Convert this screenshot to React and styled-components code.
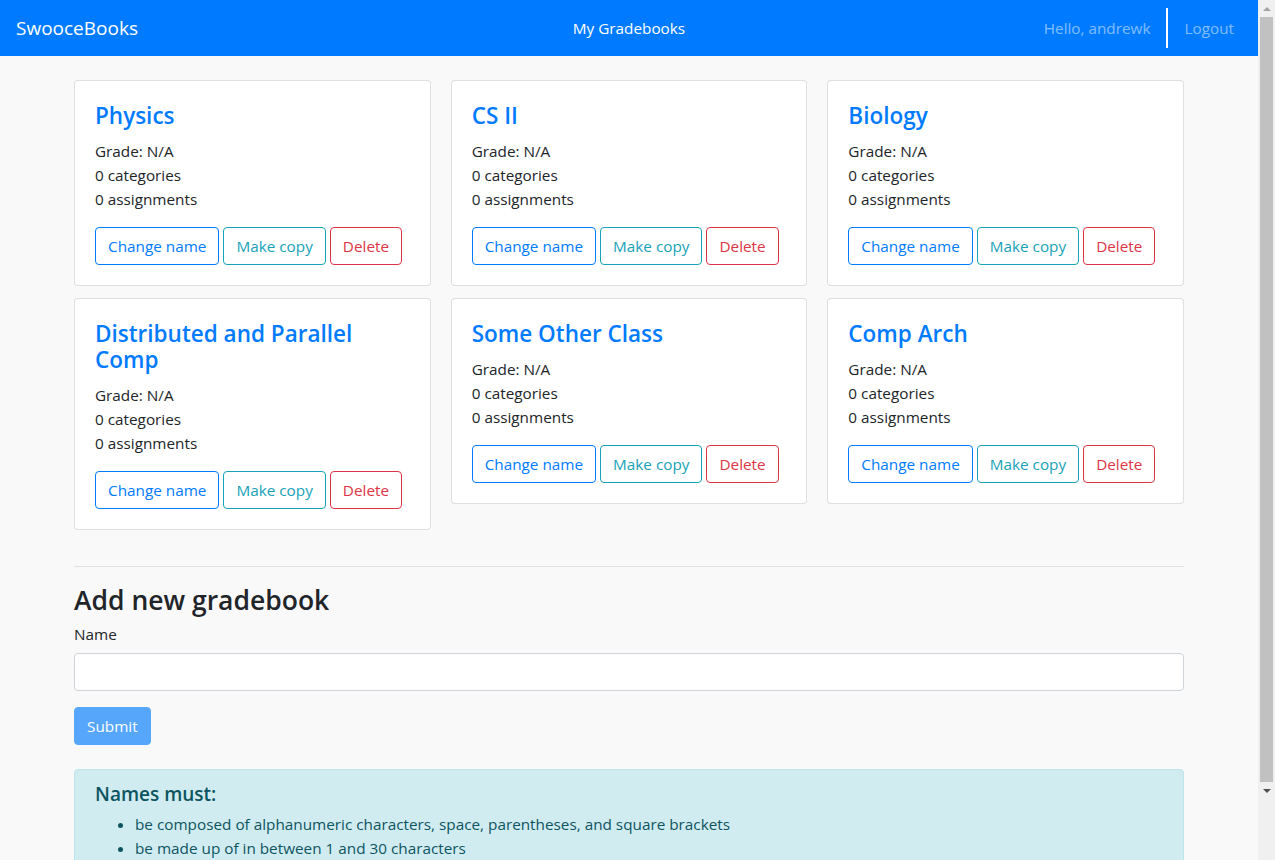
import styled, { createGlobalStyle } from "styled-components";

const GlobalStyle = createGlobalStyle`
  html, body {
    margin: 0;
    overflow: hidden;
  }
  body {
    font-family: "Open Sans", "Noto Sans", sans-serif;
    font-size: 15.3px;
    line-height: 24px;
    color: #212529;
    background-color: #f9f9f9;
  }
  * {
    box-sizing: border-box;
  }
`;

const gradebooks = [
  { name: "Physics" },
  { name: "CS II" },
  { name: "Biology" },
  { name: "Distributed and Parallel Comp" },
  { name: "Some Other Class" },
  { name: "Comp Arch" },
];

function Gradebooks() {
  return (
    <Page>
      <GlobalStyle />
      <Navbar>
        <Brand>SwooceBooks</Brand>
        <NavCenter>My Gradebooks</NavCenter>
        <NavRight>
          <NavText>Hello, andrewk</NavText>
          <Divider />
          <NavText>Logout</NavText>
        </NavRight>
      </Navbar>

      <Container>
        <CardGrid>
          {gradebooks.map((book) => (
            <Card key={book.name}>
              <CardTitle>{book.name}</CardTitle>
              <CardText>
                Grade: N/A
                <br />0 categories
                <br />0 assignments
              </CardText>
              <ButtonRow>
                <OutlineButton $color="#007bff">Change name</OutlineButton>
                <OutlineButton $color="#17a2b8">Make copy</OutlineButton>
                <OutlineButton $color="#dc3545">Delete</OutlineButton>
              </ButtonRow>
            </Card>
          ))}
        </CardGrid>

        <Rule />
        <SectionTitle>Add new gradebook</SectionTitle>
        <FormGroup>
          <Label htmlFor="name">Name</Label>
          <Input id="name" type="text" />
        </FormGroup>
        <SubmitButton disabled>Submit</SubmitButton>

        <Alert>
          <AlertHeading>Names must:</AlertHeading>
          <RuleList>
            <li>
              be composed of alphanumeric characters, space, parentheses, and
              square brackets
            </li>
            <li>be made up of in between 1 and 30 characters</li>
          </RuleList>
        </Alert>
      </Container>

      <Scrollbar>
        <Arrow $up />
        <Thumb />
        <Arrow />
      </Scrollbar>
    </Page>
  );
}

export default Gradebooks;

const Page = styled.div`
  width: calc(100vw - 17px);
  min-height: 100vh;
`;

const Navbar = styled.nav`
  height: 56px;
  background-color: #007bff;
  display: grid;
  grid-template-columns: 1fr auto 1fr;
  align-items: center;
  padding: 0 16px;
`;

const Brand = styled.div`
  color: #fff;
  font-size: 19px;
`;

const NavCenter = styled.div`
  color: #fff;
`;

const NavRight = styled.div`
  display: flex;
  align-items: center;
  justify-content: flex-end;
  gap: 16px;
  padding-right: 8px;
`;

const NavText = styled.span`
  color: rgba(255, 255, 255, 0.5);
`;

const Divider = styled.span`
  width: 2px;
  height: 40px;
  background: #fff;
`;

const Container = styled.main`
  max-width: 1140px;
  margin: 24px auto 0;
  padding: 0 15px;
`;

const CardGrid = styled.div`
  display: grid;
  grid-template-columns: repeat(3, 1fr);
  gap: 12px 20px;
  align-items: start;
`;

const Card = styled.div`
  background: #fff;
  border: 1px solid rgba(0, 0, 0, 0.125);
  border-radius: 4px;
  padding: 20px;
`;

const CardTitle = styled.h4`
  margin: 0 0 10px;
  padding-top: 2px;
  font-size: 22.5px;
  font-weight: 600;
  line-height: 26px;
  color: #007bff;
`;

const CardText = styled.p`
  margin: 0 0 16px;
`;

const ButtonRow = styled.div`
  display: flex;
  gap: 4px;
`;

const OutlineButton = styled.button`
  font-family: inherit;
  font-size: 15.3px;
  line-height: 24px;
  padding: 6px 12px;
  white-space: nowrap;
  flex-shrink: 0;
  background: transparent;
  border: 1px solid ${(p) => p.$color};
  color: ${(p) => p.$color};
  border-radius: 4px;
`;

const Rule = styled.hr`
  margin: 36px 0 16px;
  border: 0;
  border-top: 1px solid rgba(0, 0, 0, 0.1);
`;

const SectionTitle = styled.h3`
  margin: 0 0 5px;
  font-size: 26.5px;
  font-weight: 600;
  line-height: 34px;
`;

const FormGroup = styled.div`
  margin-bottom: 16px;
`;

const Label = styled.label`
  display: inline-block;
  margin-bottom: 7px;
`;

const Input = styled.input`
  display: block;
  width: 100%;
  height: 38px;
  padding: 6px 12px;
  font-family: inherit;
  font-size: 15.3px;
  background: #fff;
  border: 1px solid #ced4da;
  border-radius: 4px;
`;

const SubmitButton = styled.button`
  font-family: inherit;
  font-size: 15.3px;
  line-height: 24px;
  padding: 6px 12px;
  color: #fff;
  background: #007bff;
  border: 1px solid #007bff;
  border-radius: 4px;
  opacity: 0.65;
`;

const Alert = styled.div`
  margin-top: 24px;
  padding: 12px 20px;
  background: #d1ecf1;
  border: 1px solid #bee5eb;
  border-radius: 4px;
  color: #0c5460;
`;

const AlertHeading = styled.h5`
  margin: 0 0 6px;
  font-size: 19px;
  font-weight: 600;
  line-height: 24px;
`;

const RuleList = styled.ul`
  margin: 0 0 16px;
  padding-left: 40px;
`;

const Scrollbar = styled.div`
  position: fixed;
  top: 0;
  right: 0;
  width: 17px;
  height: 100vh;
  background: #f0f0f0;
  display: flex;
  flex-direction: column;
  align-items: center;
`;

const Arrow = styled.div`
  height: 17px;
  width: 100%;
  display: flex;
  align-items: center;
  justify-content: center;
  &::before {
    content: "";
    border-left: 4px solid transparent;
    border-right: 4px solid transparent;
    ${(p) =>
      p.$up
        ? "border-bottom: 4px solid #a3a3a3;"
        : "border-top: 4px solid #505050;"}
  }
`;

const Thumb = styled.div`
  width: 13px;
  height: 765px;
  background: #c1c1c1;
`;
